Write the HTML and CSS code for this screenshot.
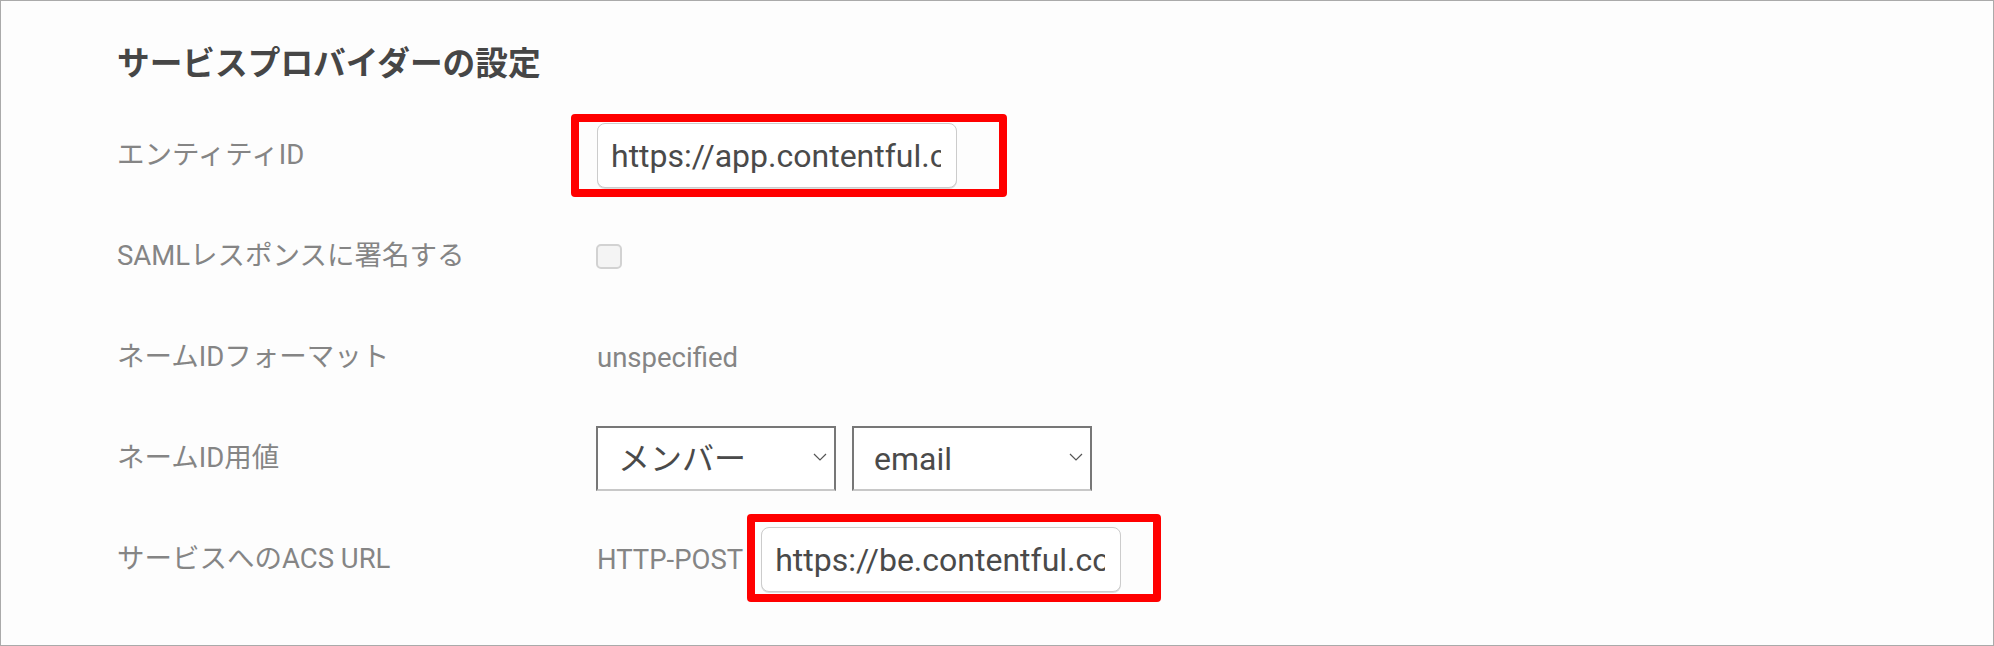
FILE: index.html
```html
<!DOCTYPE html>
<html lang="ja">
<head>
  <meta charset="UTF-8" />
  <meta name="viewport" content="width=device-width, initial-scale=1.0" />
  <title>サービスプロバイダーの設定</title>
  <link rel="stylesheet" href="styles.css">
</head>
<body>
  <div class="panel">
    <h2 class="title">サービスプロバイダーの設定</h2>
    <div class="form">
      <div class="row">
        <div class="label">エンティティID</div>
        <div class="field">
          <span class="mark mark-entity">
            <input type="text" class="text-input" value="https://app.contentful.com/sso/saml" readonly>
          </span>
        </div>
      </div>
      <div class="row">
        <div class="label">SAMLレスポンスに署名する</div>
        <div class="field"><input type="checkbox" class="check"></div>
      </div>
      <div class="row">
        <div class="label">ネームIDフォーマット</div>
        <div class="field"><span class="plain">unspecified</span></div>
      </div>
      <div class="row">
        <div class="label">ネームID用値</div>
        <div class="field selects">
          <span class="select-wrap">
            <select class="select"><option>メンバー</option></select>
            <svg class="chevron" width="14" height="8" viewBox="0 0 14 8"><path d="M1 1l6 6 6-6" fill="none" stroke="#555" stroke-width="1.2"/></svg>
          </span>
          <span class="select-wrap">
            <select class="select"><option>email</option></select>
            <svg class="chevron" width="14" height="8" viewBox="0 0 14 8"><path d="M1 1l6 6 6-6" fill="none" stroke="#555" stroke-width="1.2"/></svg>
          </span>
        </div>
      </div>
      <div class="row">
        <div class="label">サービスへのACS URL</div>
        <div class="field acs">
          <span class="plain">HTTP-POST</span>
          <span class="mark mark-acs">
            <input type="text" class="text-input" value="https://be.contentful.com/sso/saml/consume" readonly>
          </span>
        </div>
      </div>
    </div>
  </div>
</body>
</html>
```

FILE: styles.css
```css
* { box-sizing: border-box; margin: 0; padding: 0; }
body {
  font-family: Roboto, "Noto Sans CJK JP", sans-serif;
  background: #fff;
  color: #4a4a4a;
}
.panel {
  width: 100vw; height: 100vh;
  border: 1px solid #aaa;
  background: #fdfdfd;
  padding: 39px 0 0 116px;
}
.title {
  font-size: 32.7px; line-height: 48px; font-weight: bold;
  color: #464646; margin-bottom: 17px;
}
.row { display: flex; align-items: center; height: 101px; }
.label {
  width: 480px; flex-shrink: 0; margin-bottom: 8px;
  font-size: 27.5px; color: #858585;
}
.field { display: flex; align-items: center; }
.plain { font-size: 27.5px; color: #858585; }
.text-input {
  display: block;
  width: 360px; height: 65px; padding: 0 15px 0 13px;
  border: 1px solid #ccc; border-radius: 8px;
  box-shadow: 0 1px 0 #ddd;
  background: #fff; color: #4a4a4a;
  font-family: Roboto, sans-serif; font-size: 32px;
  outline: none;
}
.mark { position: relative; display: block; }
.mark::after {
  content: ""; position: absolute;
  border: 8px solid #f00; border-radius: 4px;
  pointer-events: none;
}
.mark-entity::after { left: -26px; top: -9px; right: -50px; bottom: -9px; }
.mark-acs::after { left: -14px; top: -13px; right: -40px; bottom: -10px; }
.check {
  appearance: none; -webkit-appearance: none;
  width: 26px; height: 25px;
  border: 2px solid #d2d2d2; border-radius: 5px;
  background: #f4f4f4; margin-left: -1px;
}
.selects { gap: 16px; margin-left: -1px; }
.select-wrap { position: relative; display: block; }
.select {
  appearance: none; -webkit-appearance: none;
  display: block; width: 240px; height: 65px;
  padding: 0 40px 0 20px;
  border: 2px solid #777; border-bottom-color: #c8c8c8; border-radius: 0;
  background: #fff; color: #4a4a4a;
  font-family: Roboto, "Noto Sans CJK JP", sans-serif; font-size: 32px;
}
.chevron { position: absolute; right: 9px; top: 27px; }
.acs { gap: 18px; }
```
